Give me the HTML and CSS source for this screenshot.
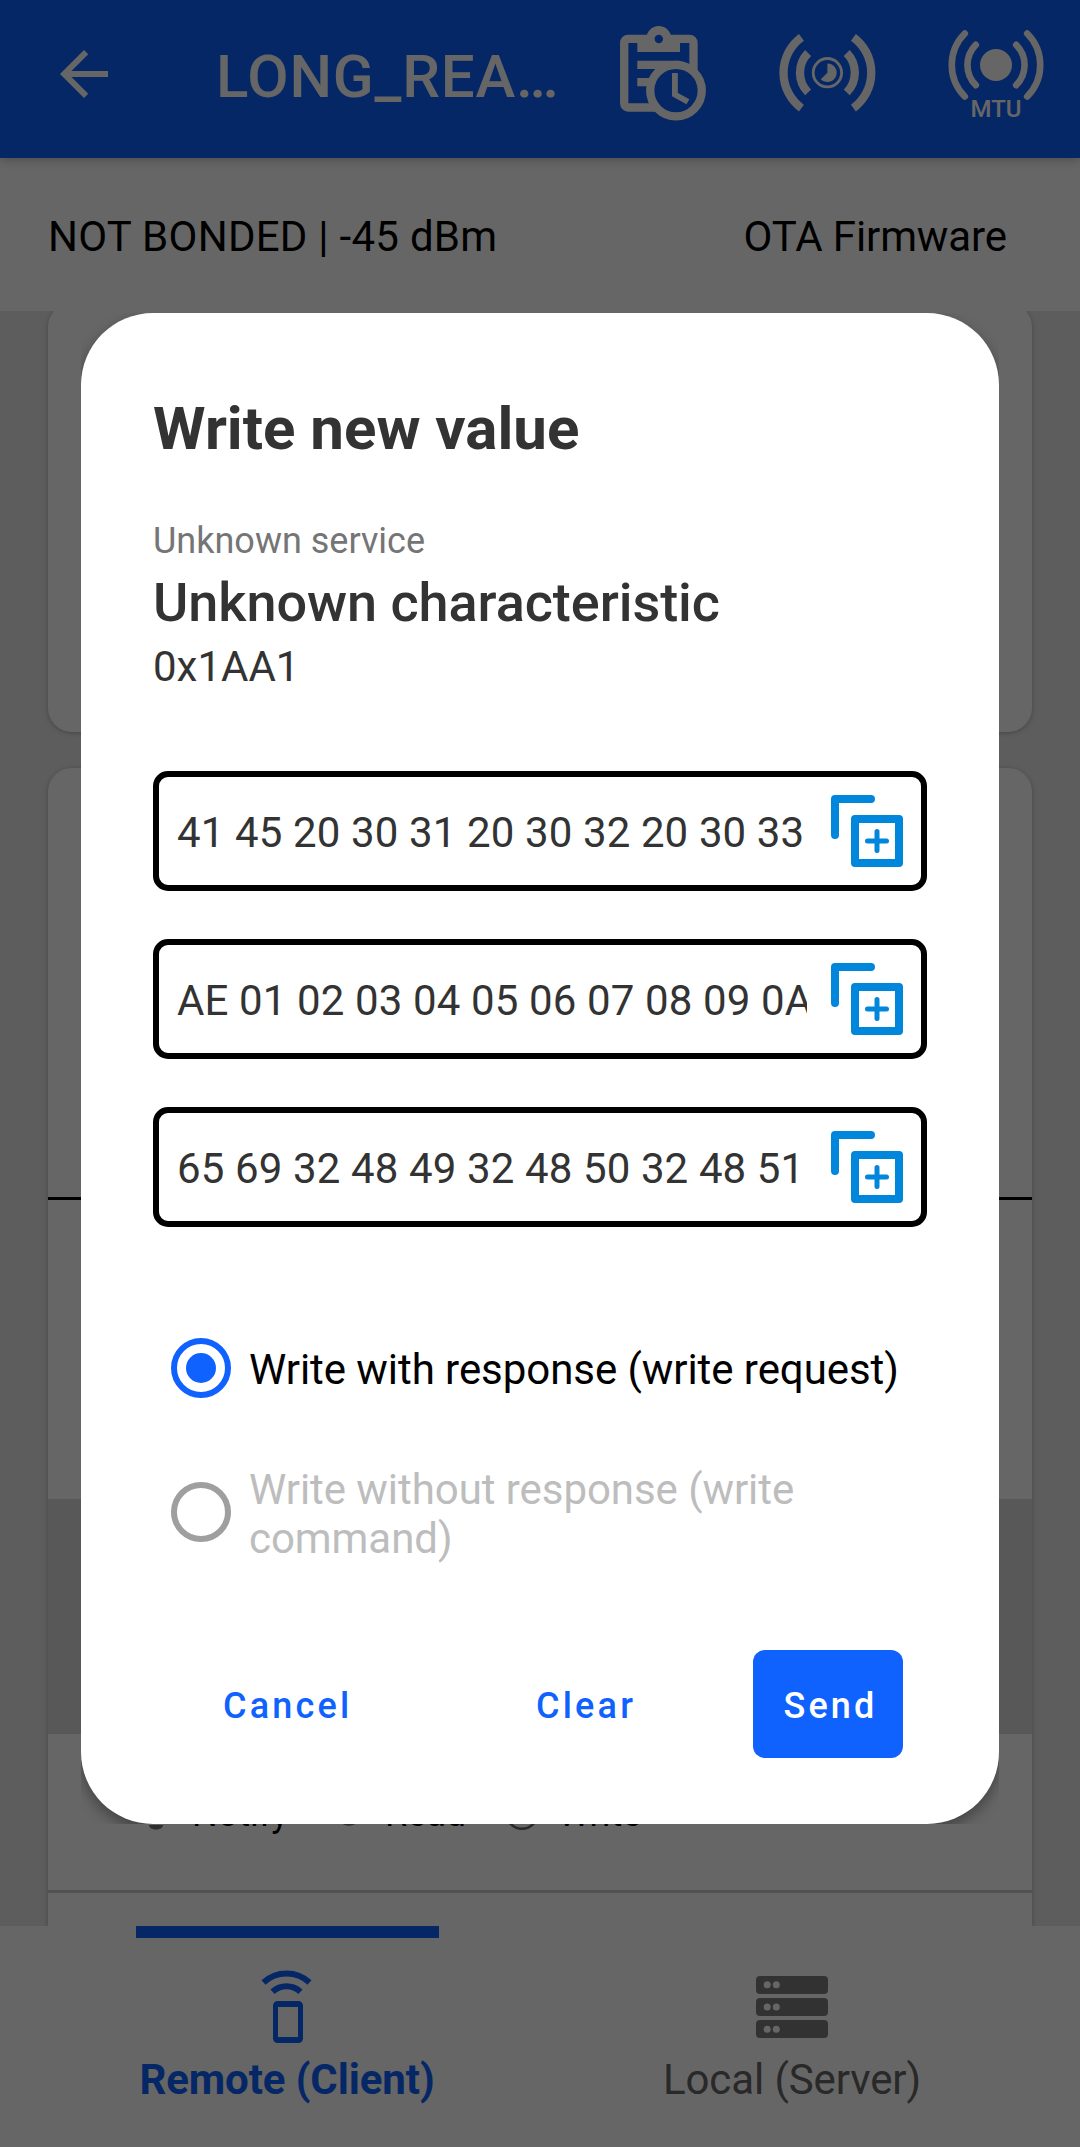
FILE: index.html
```html
<!DOCTYPE html>
<html lang="en">
<head>
<meta charset="utf-8">
<title>Write new value</title>
<link rel="stylesheet" href="styles.css">
</head>
<body>
<div class="screen">
  <header class="appbar">
    <svg class="back" viewBox="0 0 24 24"><path d="M20 11H7.83l5.59-5.59L12 4l-8 8 8 8 1.41-1.41L7.83 13H20z"/></svg>
    <h1 class="appbar-title">LONG_REA…</h1>
    <div class="actions">
      <svg class="action" viewBox="34 22 100 104">
        <path class="line" stroke-width="8.3" stroke-linejoin="round" d="M113.5 72V42.800a4 4 0 0 0-4-4H48.200a4 4 0 0 0-4 4v60.700a4 4 0 0 0 4 4H80"/>
        <path class="fill" d="M57.300 36H100v16H57.300z"/>
        <circle class="fill" cx="78.800" cy="38.500" r="12.500"/>
        <circle class="hole" cx="78.800" cy="39" r="4.200"/>
        <path class="fill" d="M57.300 60.700H100L104 69H57.300zM57.300 78H72v8.200H57.300z"/>
        <circle class="hole ring" stroke-width="8.300" cx="96" cy="90.600" r="25.800"/>
        <path class="line" stroke-width="5.800" d="M94.900 73v21.600l13 7.200"/>
      </svg>
      <svg class="action" viewBox="200 22 100 104">
        <g transform="translate(247.400 72.700)">
          <path class="line" stroke-width="8.300" d="M-26-35.400a44 44 0 0 0 0 70.800M26-35.400a44 44 0 0 1 0 70.800M-19.300-19.700a28 28 0 0 0 0 39.400M19.300-19.700a28 28 0 0 1 0 39.400"/>
          <circle class="line" stroke-width="2.800" r="14.200"/>
          <path class="fill" d="M0-9.300A9.300 9.300 0 1 1-6.600 6.600L0 0z"/>
        </g>
      </svg>
      <svg class="action" viewBox="366 22 100 104">
        <g transform="translate(416 65)">
          <path class="line round" stroke-width="6.600" d="M-31.200-31.500a44.600 44.600 0 0 0 0 63M31.200-31.500a44.600 44.600 0 0 1 0 63M-20.200-20.200a28.600 28.600 0 0 0 0 40.400M20.200-20.200a28.600 28.600 0 0 1 0 40.400"/>
          <circle class="fill" r="16"/>
          <text class="mtu" x="0" y="51.700" text-anchor="middle">MTU</text>
        </g>
      </svg>
    </div>
  </header>

  <div class="status">
    <span class="bond">NOT BONDED | -45 dBm</span>
    <span class="ota">OTA Firmware</span>
  </div>

  <main class="services">
    <section class="card card-first"></section>
    <section class="card card-second">
      <div class="row row-head"></div>
      <div class="row row-info"></div>
      <div class="row row-selected"></div>
      <div class="row row-props">
        <span class="prop prop-notify"><svg viewBox="0 0 36 36"><path class="prop-fill" d="M11 32h14c0 6-14 6-14 0z"/></svg>Notify</span>
        <span class="prop prop-read"><svg viewBox="0 0 36 36"><path class="prop-fill" d="M4 20c5 17 23 17 28 0z"/></svg>Read</span>
        <span class="prop prop-write"><svg viewBox="0 0 36 36"><circle class="prop-line" cx="18" cy="20" r="15.800"/></svg>Write</span>
      </div>
    </section>
  </main>

  <nav class="tabs">
    <div class="tab tab-active">
      <svg class="tab-icon" viewBox="0 0 78 78">
        <path class="tab-line" d="M15.500 14.500a34 34 0 0 1 46 0M24.500 23.700a20.500 20.500 0 0 1 28 0"/>
        <path class="tab-fill" fill-rule="evenodd" d="M29.500 33h21a4.500 4.500 0 0 1 4.500 4.500v33a4.500 4.500 0 0 1-4.500 4.500h-21a4.500 4.500 0 0 1-4.500-4.500v-33a4.500 4.500 0 0 1 4.500-4.500zM30 39v30h20V39z"/>
      </svg>
      <span>Remote (Client)</span>
    </div>
    <div class="tab">
      <svg class="tab-icon" viewBox="0 0 78 78">
        <g class="server">
          <rect x="3" y="8" width="72" height="18" rx="4"/><rect x="3" y="30" width="72" height="18" rx="4"/><rect x="3" y="52" width="72" height="18" rx="4"/>
        </g>
        <g class="lamp">
          <circle cx="14.200" cy="16.700" r="3.500"/><circle cx="23.300" cy="16.700" r="3.500"/>
          <circle cx="14.200" cy="39" r="3.500"/><circle cx="23.300" cy="39" r="3.500"/>
          <circle cx="14.200" cy="61.300" r="3.500"/><circle cx="23.300" cy="61.300" r="3.500"/>
        </g>
      </svg>
      <span>Local (Server)</span>
    </div>
  </nav>

  <div class="scrim">
    <div class="dialog-window">
      <div class="dialog">
        <h2 class="dialog-title">Write new value</h2>
        <p class="service">Unknown service</p>
        <h3 class="characteristic">Unknown characteristic</h3>
        <p class="uuid">0x1AA1</p>

        <div class="fields">
          <div class="field"><span class="value">41 45 20 30 31 20 30 32 20 30 33</span>
            <svg class="copy" viewBox="0 0 72 72"><path class="copy-thick round" d="M4 40V4h36"/><rect class="copy-thick" x="24" y="24" width="44" height="44" stroke-linejoin="round"/><path class="copy-thin round" d="M46 36.500v19M36.500 46h19"/></svg></div>
          <div class="field"><span class="value">AE 01 02 03 04 05 06 07 08 09 0A</span>
            <svg class="copy" viewBox="0 0 72 72"><path class="copy-thick round" d="M4 40V4h36"/><rect class="copy-thick" x="24" y="24" width="44" height="44" stroke-linejoin="round"/><path class="copy-thin round" d="M46 36.500v19M36.500 46h19"/></svg></div>
          <div class="field"><span class="value">65 69 32 48 49 32 48 50 32 48 51</span>
            <svg class="copy" viewBox="0 0 72 72"><path class="copy-thick round" d="M4 40V4h36"/><rect class="copy-thick" x="24" y="24" width="44" height="44" stroke-linejoin="round"/><path class="copy-thin round" d="M46 36.500v19M36.500 46h19"/></svg></div>
        </div>

        <div class="options">
          <div class="option"><span class="radio radio-on"></span><span class="option-label">Write with response (write request)</span></div>
          <div class="option option-disabled"><span class="radio"></span><span class="option-label">Write without response (write command)</span></div>
        </div>

        <div class="buttons">
          <button class="button button-cancel">Cancel</button>
          <button class="button button-clear">Clear</button>
          <button class="button button-send">Send</button>
        </div>
      </div>
    </div>
  </div>
</div>
</body>
</html>
```
FILE: styles.css
```css
* { box-sizing: border-box; }
body { margin: 0; font-family: Roboto, "Liberation Sans", sans-serif; }
h1, h2, h3, p { margin: 0; }
svg { display: block; flex: none; overflow: visible; }

.screen {
  position: relative;
  display: flex;
  flex-direction: column;
  width: 1080px;
  height: 2147px;
  overflow: hidden;
  background: #e8e8e8;
}

/* App bar */
.appbar {
  position: relative;
  z-index: 1;
  display: flex;
  flex: none;
  align-items: flex-start;
  height: 158px;
  padding: 22px 34px 0 48px;
  background: #0f62fe;
  box-shadow: 0 2px 10px rgba(0, 0, 0, .25);
}
.back { width: 72px; height: 72px; margin-top: 16px; fill: #fff; }
.appbar-title {
  margin: 20px 0 0 96px;
  font-size: 60px;
  line-height: 70px;
  font-weight: 500;
  letter-spacing: .8px;
  color: #fff;
  white-space: nowrap;
}
.actions { display: flex; justify-content: space-between; width: 432px; margin-left: auto; }
.action { width: 100px; height: 104px; }
.action .line { fill: none; stroke: #fff; }
.action .fill { fill: #fff; }
.action .hole { fill: #0f62fe; }
.action .ring { stroke: #fff; }
.round { stroke-linecap: round; stroke-linejoin: round; }
.mtu { font-size: 24px; font-weight: 500; fill: #fff; }

/* Connection status */
.status {
  display: flex;
  flex: none;
  align-items: center;
  justify-content: space-between;
  height: 153px;
  padding: 4px 73px 0 48px;
  font-size: 42px;
  line-height: 50px;
  color: #000;
  background: #fff;
}
.bond { letter-spacing: .27px; }
.ota { letter-spacing: -.1px; }

/* Service list */
.services { flex: 1; min-height: 0; padding: 0 48px; overflow: hidden; }
.card { background: #fff; border-radius: 24px; box-shadow: 0 1px 5px rgba(0, 0, 0, .25); }
.card-first { height: 429px; margin-top: -8px; }
.card-second { height: 1300px; margin-top: 36px; }
.row-head { height: 432px; border-bottom: 3px solid #000; }
.row-info { height: 299px; }
.row-selected { height: 235px; background: #dcdcdc; }
.row-props {
  display: flex;
  height: 159px;
  padding: 59px 0 0 90px;
  border-bottom: 3px solid #cdcdcd;
}
.prop { display: flex; gap: 18px; font-size: 36px; line-height: 42px; color: #000; }
.prop svg { width: 36px; height: 36px; }
.prop-notify { width: 193px; }
.prop-read { width: 173px; }
.prop-fill { fill: #777; }
.prop-line { fill: none; stroke: #666; stroke-width: 2.500px; }

/* Bottom tabs */
.tabs { display: flex; flex: none; gap: 1px; height: 221px; padding: 0 36px 0 35px; background: #fff; }
.tab {
  display: flex;
  flex: 1;
  flex-direction: column;
  align-items: center;
  font-size: 42px;
  line-height: 50px;
  letter-spacing: -.1px;
  color: #666;
}
.tab::before { content: ""; width: 303px; height: 12px; }
.tab-active { font-weight: 700; color: #0f62fe; }
.tab-active::before { background: #0f62fe; }
.tab-icon { width: 78px; height: 78px; margin: 30px 0 9px; }
.tab-line { fill: none; stroke: #0f62fe; stroke-width: 6; }
.tab-fill { fill: #0f62fe; }
.server { fill: #7d7d7d; }
.lamp { fill: #fff; }

/* Dialog */
.scrim {
  position: absolute;
  inset: 0;
  z-index: 2;
  padding: 313px 81px 0;
  background: rgba(0, 0, 0, .6);
}
.dialog-window { height: 1511px; overflow: hidden; }
.dialog {
  height: 1511px;
  padding: 81px 72px 0;
  border-radius: 72px;
  background: #fff;
  box-shadow: 0 6px 14px rgba(0, 0, 0, .35);
  color: #333;
}
.dialog-title { font-size: 60px; line-height: 70px; font-weight: 700; }
.service { margin-top: 56px; font-size: 36px; line-height: 42px; color: #757575; }
.characteristic { margin-top: 9px; font-size: 54px; line-height: 64px; font-weight: 500; letter-spacing: -.05px; }
.uuid { margin-top: 7px; font-size: 42px; line-height: 50px; }

.fields { display: flex; flex-direction: column; gap: 48px; margin-top: 79px; }
.field {
  display: flex;
  justify-content: space-between;
  height: 120px;
  padding: 18px 18px 0;
  border: 6px solid #000;
  border-radius: 15px;
}
.value {
  width: 630px;
  margin-top: 13px;
  overflow: hidden;
  font-size: 42px;
  line-height: 50px;
  letter-spacing: .12px;
  white-space: nowrap;
}
.copy { width: 72px; height: 72px; }
.copy-thick { fill: none; stroke: #0087dc; stroke-width: 8; }
.copy-thin { fill: none; stroke: #0087dc; stroke-width: 5; }

.options { margin-top: 69px; padding-left: 18px; }
.option { display: flex; align-items: center; gap: 18px; height: 144px; font-size: 42px; line-height: 49px; letter-spacing: -.06px; color: #000; }
.option-label { width: 660px; padding-top: 3px; }
.option-disabled { color: #bdbdbd; }
.radio {
  display: flex;
  flex: none;
  align-items: center;
  justify-content: center;
  width: 60px;
  height: 60px;
  border: 6px solid #9f9f9f;
  border-radius: 50%;
}
.radio-on { border-color: #0f62fe; }
.radio-on::before { content: ""; width: 30px; height: 30px; border-radius: 50%; background: #0f62fe; }

.buttons { display: flex; margin-top: 66px; }
.button {
  height: 108px;
  padding: 3px 0 0;
  border: 0;
  background: none;
  font: 500 36px/42px Roboto, "Liberation Sans", sans-serif;
  letter-spacing: 3.200px;
  color: #0f62fe;
}
.button-cancel { width: 268px; padding-left: 70px; text-align: left; }
.button-clear { width: 332px; padding-left: 115px; text-align: left; }
.button-send { width: 150px; padding-left: 5px; border-radius: 12px; background: #0f62fe; color: #fff; }
```
